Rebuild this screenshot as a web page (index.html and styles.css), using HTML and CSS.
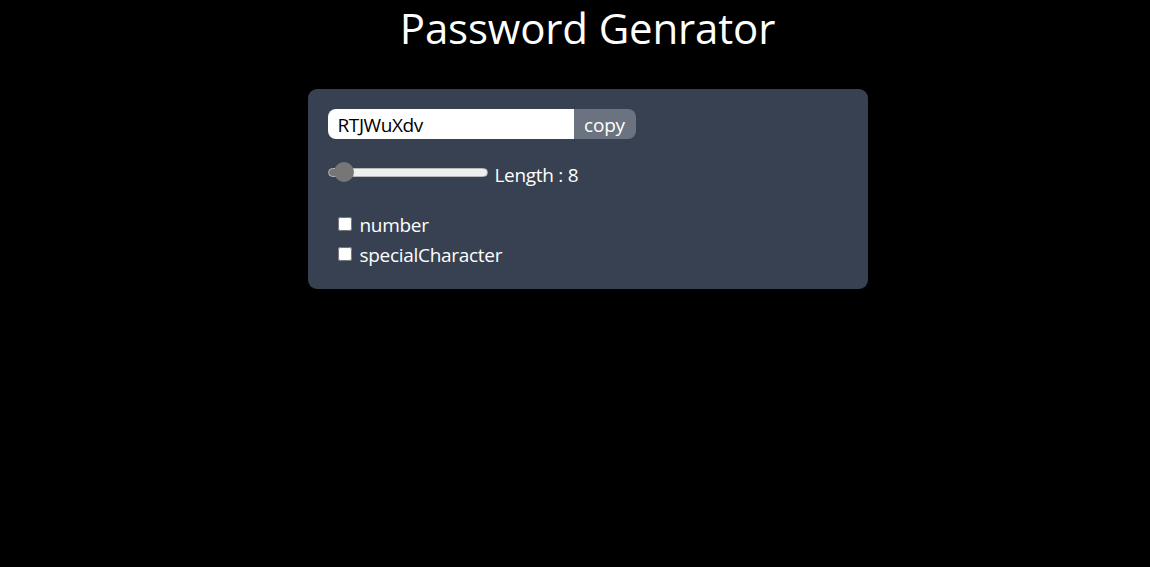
FILE: index.html
```html
<!DOCTYPE html>
<html lang="en">
<head>
<meta charset="utf-8">
<title>Password Genrator</title>
<link rel="stylesheet" href="styles.css">
</head>
<body>
<div class="page">
  <h1 class="title">Password Genrator</h1>
  <div class="card">
    <div class="field">
      <input class="pwd" type="text" value="RTJWuXdv" readonly>
      <button class="copy">copy</button>
    </div>
    <div class="length-row">
      <input class="range" type="range" min="4" max="100" value="8">
      <label class="length-label">Length : 8</label>
    </div>
    <div class="options">
      <label class="option"><input type="checkbox" class="check"><span>number</span></label>
      <label class="option"><input type="checkbox" class="check"><span>specialCharacter</span></label>
    </div>
  </div>
</div>
</body>
</html>
```

FILE: styles.css
```css
* { box-sizing: border-box; }
html, body { margin: 0; padding: 0; background: #000; }
body {
  font-family: "Open Sans", "Noto Sans", sans-serif;
  color: #fff;
  height: 567px;
  overflow: hidden;
}
.page {
  padding-left: 25px;
}
.title {
  margin: 0;
  padding-top: 2px;
  text-align: center;
  font-weight: 400;
  font-size: 42px;
  line-height: 52px;
  letter-spacing: -0.15px;
}
.card {
  width: 560px;
  height: 200px;
  margin: 35px auto 0;
  background: #374151;
  border-radius: 9px;
  padding: 20px;
}
.field {
  display: flex;
  width: 308px;
  height: 30px;
  border-radius: 8px;
  overflow: hidden;
}
.pwd {
  width: 246px;
  height: 30px;
  border: 0;
  outline: none;
  padding: 2px 10px 0;
  background: #fff;
  color: #000;
  font-family: inherit;
  font-size: 19px;
  letter-spacing: -0.4px;
}
.copy {
  width: 62px;
  height: 30px;
  border: 0;
  background: #6b7280;
  color: #fff;
  font-family: inherit;
  font-size: 19px;
  padding: 1px 0 0;
  letter-spacing: -0.2px;
}
.length-row {
  display: flex;
  align-items: center;
  margin-top: 22px;
  height: 22px;
}
.range {
  -webkit-appearance: none;
  appearance: none;
  width: 160px;
  height: 20px;
  margin: 0;
  background: transparent;
}
.range::-webkit-slider-runnable-track {
  height: 9px;
  border-radius: 5px;
  border: 1px solid #b9b9b9;
  background: linear-gradient(to right, #767676 0 10px, #efefef 10px);
}
.range::-webkit-slider-thumb {
  -webkit-appearance: none;
  appearance: none;
  width: 20px;
  height: 20px;
  border-radius: 50%;
  background: #767676;
  margin-top: -6.5px;
  border: 0;
}
.length-label {
  margin-left: 7px;
  font-size: 19px;
  line-height: 22px;
  padding-top: 6px;
  letter-spacing: -0.3px;
}
.options {
  margin-top: 27px;
  padding-left: 10px;
  display: flex;
  flex-direction: column;
}
.option {
  display: flex;
  align-items: center;
  height: 30px;
  font-size: 19px;
  letter-spacing: -0.3px;
}
.check {
  width: 14px;
  height: 14px;
  margin: 0 8px 3px 0;
  accent-color: #fff;
}
```
